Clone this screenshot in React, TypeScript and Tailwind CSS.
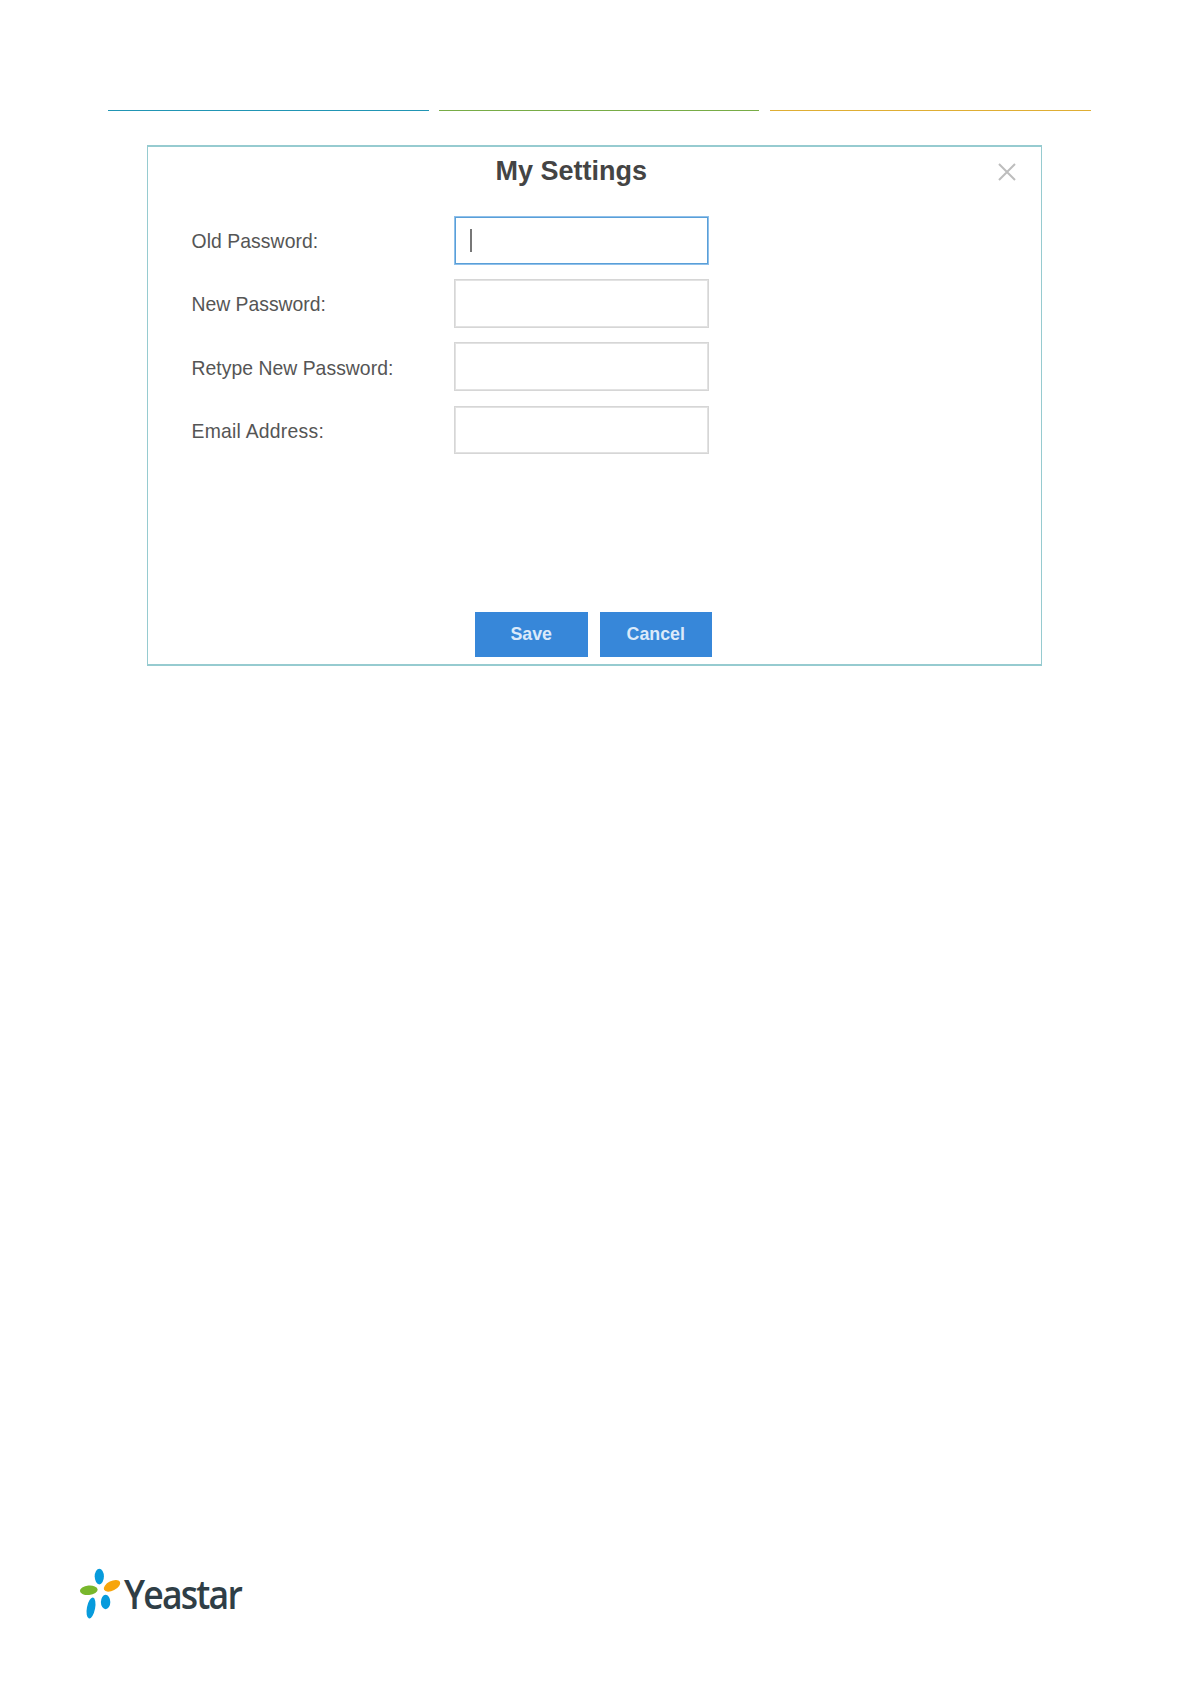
const fields = [
  { label: 'Old Password:', focused: true, tracking: 'tracking-[0.08px]' },
  { label: 'New Password:', focused: false, tracking: 'tracking-[0px]' },
  { label: 'Retype New Password:', focused: false, tracking: 'tracking-[0.04px]' },
  { label: 'Email Address:', focused: false, tracking: 'tracking-[0.25px]' },
];

function HeaderRules() {
  return (
    <header className="flex pt-[110px] pl-[108px]">
      <div className="h-px w-[321px] bg-[#2195b4]" />
      <div className="ml-[10px] h-px w-[320px] bg-[#78ac46]" />
      <div className="ml-[11px] h-px w-[321px] bg-[#dfae34]" />
    </header>
  );
}

function Field({ label, focused, tracking }: { label: string; focused: boolean; tracking: string }) {
  return (
    <label className="flex h-[48.6px] items-center">
      <span className={`w-[263px] pt-[2px] pl-[0.5px] text-[19.35px] leading-6 whitespace-nowrap text-[#555] ${tracking}`}>{label}</span>
      <span
        className={
          focused
            ? 'flex h-full w-[255px] items-center border border-[#8fc0ea] inset-ring inset-ring-[#5a9fd8] pl-[15px]'
            : 'flex h-full w-[255px] items-center border border-[#d6d6d6] inset-ring inset-ring-[#e2e2e2] pl-[15px]'
        }
      >
        {focused && <span className="mt-px h-[23px] w-[2px] bg-[#777]" />}
      </span>
    </label>
  );
}

function Logo() {
  return (
    <svg className="h-[60px] w-[180px] overflow-visible" viewBox="0 0 180 60" role="img" aria-label="Yeastar">
      <ellipse cx="19.3" cy="16.6" rx="4.6" ry="7.8" fill="#079bdc" />
      <ellipse cx="8.8" cy="30.3" rx="8.9" ry="4.7" fill="#78b72c" transform="rotate(-5 8.8 30.3)" />
      <ellipse cx="32" cy="25.8" rx="8.9" ry="4.8" fill="#f7a50c" transform="rotate(-27 32 25.8)" />
      <ellipse cx="11" cy="48" rx="4.1" ry="10.6" fill="#079bdc" transform="rotate(11 11 48)" />
      <ellipse cx="25.6" cy="42" rx="4.7" ry="7.2" fill="#079bdc" />
      <text
        x="44"
        y="49"
        textLength="117"
        lengthAdjust="spacingAndGlyphs"
        className="font-['Open_Sans',sans-serif] text-[39.5px] font-semibold tracking-[-2px]"
        fill="#2f3e46"
      >
        Yeastar
      </text>
    </svg>
  );
}

export default function App() {
  return (
    <div className="flex h-[1684px] w-[1191px] flex-col bg-white font-['Liberation_Sans',sans-serif]">
      <HeaderRules />
      <main className="mt-[34px] ml-[147px] flex h-[521px] w-[895px] flex-col border-x border-y-2 border-[#96cbd0]">
        <div className="flex h-[69px] justify-between pt-[8px] pr-[25px] pl-[347.5px]">
          <h1 className="text-[27px] leading-8 font-bold text-[#444]">My Settings</h1>
          <svg className="mt-[8px] h-[18px] w-[18px]" viewBox="0 0 18 18" stroke="#bdbdbd" strokeWidth="2" aria-label="Close">
            <path d="M1 1L17 17M17 1L1 17" />
          </svg>
        </div>
        <div className="flex flex-col gap-[14.6px] pl-[43px]">
          {fields.map((field) => (
            <Field key={field.label} {...field} />
          ))}
        </div>
        <div className="mt-auto mb-[7px] flex gap-3 pl-[327px]">
          <button className="h-[45px] w-[112.5px] bg-[#3787d9] text-[17.8px] font-bold text-[#dbeafa]">Save</button>
          <button className="h-[45px] w-[112.5px] bg-[#3787d9] text-[17.8px] font-bold text-[#dbeafa]">Cancel</button>
        </div>
      </main>
      <footer className="mt-auto mb-[64px] pl-[80px]">
        <Logo />
      </footer>
    </div>
  );
}
